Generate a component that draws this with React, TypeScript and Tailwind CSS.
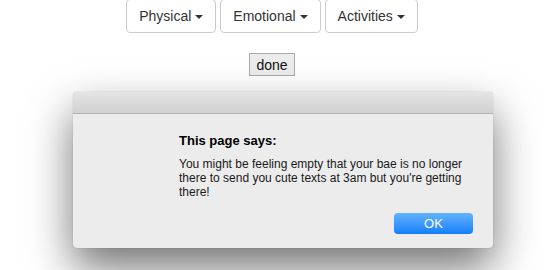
import React from "react";

function Dropdown({ label }: { label: string }) {
  return (
    <button className="flex h-[34px] items-center rounded-[4px] border border-[#cccccc] bg-white px-[12px] text-[14px] text-[#333333]">
      {label}
      <span className="ml-[4px] mt-[1px] inline-block h-0 w-0 border-x-[4px] border-t-[4px] border-x-transparent border-t-[#333333]" />
    </button>
  );
}

export default function App() {
  return (
    <div className="relative h-[270px] w-[548px] overflow-hidden bg-white font-['Liberation_Sans',Arial,sans-serif]">
      <div className="flex flex-col items-center pr-[4px]">
        <div className="-mt-px flex gap-[4px]">
          <Dropdown label="Physical" />
          <Dropdown label="Emotional" />
          <Dropdown label="Activities" />
        </div>
        <button className="mt-[20px] h-[23px] border border-[#a9a9a9] bg-[#ececec] px-[6px] text-[14px] leading-none text-[#111]">
          done
        </button>
      </div>

      {/* alert sheet */}
      <div className="absolute left-[73px] top-[92px] flex h-[156px] w-[420px] flex-col overflow-hidden rounded-[4px] bg-[#ececec] shadow-[0_20px_44px_rgba(0,0,0,0.55),0_0_1px_rgba(0,0,0,0.35)]">
        <div className="h-[22px] border-b border-[#b3b3b3] bg-gradient-to-b from-[#e6e5e6] to-[#d2d1d2]" />
        <div className="flex flex-col pl-[106px] pr-[20px] pt-[19px]">
          <div className="text-[13px] font-bold leading-[16px] text-black">This page says:</div>
          <p className="mt-[8px] w-[290px] text-[12px] leading-[14px] text-[#1a1a1a]">
            You might be feeling empty that your bae is no longer there to send you cute texts at 3am but you're getting there!
          </p>
          <div className="mt-[14px] flex justify-end">
            <button className="h-[21px] w-[79px] rounded-[4px] bg-gradient-to-b from-[#62b2fc] to-[#0f7ffd] text-[13px] leading-none text-white">
              OK
            </button>
          </div>
        </div>
      </div>
    </div>
  );
}
